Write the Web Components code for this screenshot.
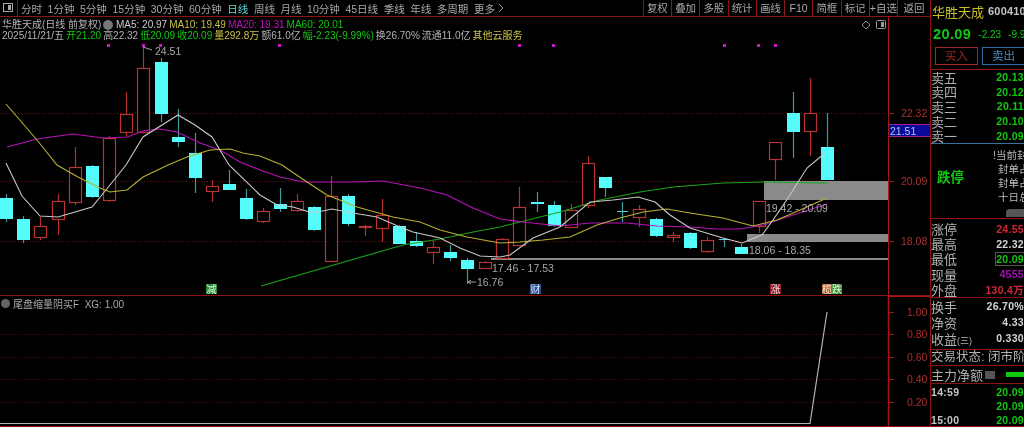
<!DOCTYPE html>
<html>
<head>
<meta charset="utf-8">
<style>
  html, body { margin: 0; padding: 0; background: #000; overflow: hidden; }
  body { font: 10px "Liberation Sans", "Noto Sans CJK SC", sans-serif; color: #b8b8b8; }
</style>
</head>
<body>
<stock-terminal>
  <kline-toolbar slot="toolbar"></kline-toolbar>
  <price-chart slot="main"></price-chart>
  <indicator-chart slot="main"></indicator-chart>
  <quote-panel slot="side"></quote-panel>
</stock-terminal>

<script>
const FONT = '"Liberation Sans", "Noto Sans CJK SC", sans-serif';
const RED_LINE = "#8e1414";

const toPoints = list => list.map(p => p.join(",")).join(" ");

class StockTerminal extends HTMLElement {
  constructor() {
    super();
    const shadowRoot = this.attachShadow({ mode: "open" });
    shadowRoot.innerHTML = `
    <style>
    :host { display: flex; width: 1024px; height: 427px; background: #000; overflow: hidden; filter: blur(.3px); }
    .left { width: 930px; display: flex; flex-direction: column; }
    .side { width: 94px; }
    </style>
    <div class="left">
      <slot name="toolbar"></slot>
      <slot name="main"></slot>
    </div>
    <div class="side"><slot name="side"></slot></div>`;
  }
}

class KlineToolbar extends HTMLElement {
  constructor() {
    super();
    const shadowRoot = this.attachShadow({ mode: "open" });
    this.periods = ["分时", "1分钟", "5分钟", "15分钟", "30分钟", "60分钟", "日线", "周线", "月线", "10分钟", "45日线", "季线", "年线", "多周期", "更多"];
    this.tools = ["复权", "叠加", "多股", "统计", "画线", "F10", "简框", "标记", "+自选", "返回"];
    shadowRoot.innerHTML = this._render();
  }

  _render() {
    const periods = this.periods.map(p => `<span class="${p === "日线" ? "on" : ""}">${p}</span>`).join("");
    const tools = this.tools.map(t => `<b>${t}</b>`).join("");
    return `
    <style>
    :host { display: flex; align-items: center; height: 16px; border-bottom: 1px solid ${RED_LINE}; font: 10.5px ${FONT}; color: #a8a8a8; white-space: nowrap; }
    svg { display: block; }
    .icon { width: 18px; height: 16px; box-sizing: border-box; padding: 3px 0 0 3px; border-right: 1px solid ${RED_LINE}; flex: none; }
    .periods { display: flex; gap: 5.6px; padding-left: 3px; flex: 1; align-items: center; }
    .on { color: #5fd8d8; }
    .tools { display: flex; height: 16px; }
    b { font-weight: normal; width: 28.25px; box-sizing: border-box; border-left: 1px solid ${RED_LINE}; text-align: center; line-height: 16px; }
    b:last-child { width: 33px; }
    .chev { margin-left: -3px; }
    </style>
    <div class="icon"><svg width="11" height="10"><rect x=".5" y=".5" width="9" height="8" fill="none" stroke="#aaa"/><rect x="5" y="2" width="3" height="5" fill="#aaa"/></svg></div>
    <div class="periods">${periods}<svg class="chev" width="6" height="10"><path d="M1 1l4 4-4 4" fill="none" stroke="#999"/></svg></div>
    <div class="tools">${tools}</div>`;
  }
}

class PriceChart extends HTMLElement {
  constructor() {
    super();
    const shadowRoot = this.attachShadow({ mode: "open" });
    // x, wick top, wick bottom, body top, body bottom, up
    this.candles = [
      [6, 194, 222, 198, 219, 0], [23, 216, 243, 219, 240, 0], [40, 217, 240, 226, 237, 1], [58, 194, 235, 201, 219, 1],
      [75, 147, 205, 167, 202, 1], [92, 165, 198, 166, 197, 0], [109, 136, 202, 138, 200, 1], [126, 92, 136, 114, 132, 1],
      [143, 45, 132, 68, 132, 1], [161, 58, 122, 62, 114, 0], [178, 109, 147, 137, 142, 0], [195, 133, 193, 153, 178, 0],
      [212, 180, 202, 186, 191, 1], [229, 170, 190, 184, 190, 0], [246, 189, 220, 198, 219, 0], [263, 208, 223, 211, 221, 1],
      [280, 188, 212, 204, 209, 0], [297, 194, 212, 201, 210, 1], [314, 206, 231, 207, 230, 0], [331, 176, 261, 196, 261, 1],
      [348, 194, 226, 196, 224, 0], [365, 225, 236, 226, 226, 1], [382, 199, 242, 215, 228, 1], [399, 225, 244, 226, 244, 0],
      [416, 232, 247, 241, 246, 0], [433, 241, 264, 247, 252, 1], [450, 245, 261, 252, 258, 0], [467, 258, 284, 260, 269, 0],
      [485, 261, 269, 262, 268, 1], [502, 238, 259, 239, 258, 1], [519, 187, 246, 207, 245, 1], [537, 192, 212, 202, 204, 0],
      [554, 201, 227, 205, 226, 0], [571, 204, 228, 210, 227, 1], [588, 156, 208, 163, 205, 1], [605, 177, 197, 177, 188, 0],
      [622, 202, 222, 211, 211, 0], [639, 205, 227, 209, 217, 1], [656, 218, 237, 219, 236, 0], [673, 232, 242, 235, 237, 1],
      [690, 232, 249, 233, 248, 0], [707, 237, 253, 240, 251, 1], [724, 238, 247, 239, 239, 0], [741, 244, 254, 247, 254, 0],
      [759, 201, 233, 201, 226, 1], [775, 142, 180, 142, 159, 1], [793, 92, 158, 113, 132, 0], [810, 78, 156, 113, 131, 1],
      [827, 113, 180, 147, 180, 0]
    ];
    this.ma5 = [[6, 163], [22, 196], [40, 216], [58, 217], [92, 207], [110, 185], [126, 165], [143, 137], [178, 115], [195, 125], [212, 137], [229, 165], [260, 195], [277, 205], [293, 207], [313, 213], [332, 209], [353, 213], [377, 217], [400, 227], [413, 232], [440, 238], [460, 248], [480, 256], [500, 257], [510, 255], [533, 238], [560, 227], [590, 202], [613, 200], [638, 197], [655, 202], [670, 215], [690, 228], [723, 238], [742, 243], [762, 235], [773, 220], [788, 198], [807, 168], [825, 153]];
    this.ma10 = [[6, 104], [37, 140], [57, 165], [78, 177], [100, 188], [110, 192], [127, 190], [143, 177], [168, 165], [187, 157], [210, 150], [230, 149], [243, 153], [260, 156], [282, 165], [307, 182], [327, 195], [357, 207], [393, 217], [420, 222], [440, 230], [467, 237], [500, 243], [520, 242], [543, 240], [570, 237], [597, 225], [620, 218], [643, 212], [667, 209], [690, 213], [723, 218], [753, 226], [777, 220], [800, 210], [827, 198]];
    this.ma20 = [[7, 147], [37, 139], [73, 134], [103, 138], [127, 137], [143, 131], [160, 129], [177, 132], [200, 143], [220, 150], [240, 162], [260, 170], [280, 177], [303, 182], [353, 182], [383, 181], [420, 188], [447, 195], [473, 208], [500, 219], [523, 222], [560, 226], [590, 223], [627, 223], [657, 226], [690, 227], [717, 229], [740, 229], [763, 225], [787, 217], [827, 204]];
    this.ma60 = [[261, 286], [403, 245], [440, 239], [473, 232], [500, 227], [560, 212], [600, 200], [640, 192], [673, 187], [723, 183], [763, 182], [827, 183]];
    this.dots = [108, 143, 160, 279, 519, 553, 724, 758, 775];
    shadowRoot.innerHTML = this._render();
  }

  renderCandles() {
    let items = "";
    this.candles.forEach(([x, hi, lo, top, bottom, up]) => {
      const wick = up ? "#b03030" : "#3e9aa0";
      items += `<line x1="${x + .5}" x2="${x + .5}" y1="${hi}" y2="${lo}" stroke="${wick}" stroke-width="1.2"/>`;
      if (up) {
        items += `<rect x="${x - 5.5}" y="${top + .5}" width="12" height="${Math.max(bottom - top, 1)}" fill="#000" stroke="#b83232" stroke-width="1.2"/>`;
      } else if (bottom - top < 1) {
        items += `<line x1="${x - 5}" x2="${x + 6}" y1="${top + .5}" y2="${top + .5}" stroke="#4fd8dc"/>`;
      } else {
        items += `<rect x="${x - 6}" y="${top}" width="13" height="${bottom - top}" fill="#54fcfc"/>`;
      }
    });
    return items;
  }

  renderMarks() {
    const marks = [[206, 11, "减", "#2e8b3a", "#d8f8d8"], [530, 11, "财", "#2a4f8c", "#cfe0ff"], [770, 11, "涨", "#8c1a2a", "#ffd8d8"], [822, 10, "榄", "#a86030", "#ffe8d0"], [832, 10, "跌", "#3f8f3a", "#dcf8d8"]];
    return marks.map(([x, w, t, bg, fg]) => `
      <rect x="${x}" y="284" width="${w}" height="10" fill="${bg}"/>
      <text x="${x + w / 2}" y="293" fill="${fg}" text-anchor="middle" font-size="10">${t}</text>`).join("");
  }

  _render() {
    const hLines = [113, 181, 241].map(y => `
      <line x1="0" x2="888" y1="${y + .5}" y2="${y + .5}" stroke="#701010" stroke-dasharray="1 2"/>
      <line x1="888" x2="894" y1="${y + .5}" y2="${y + .5}" stroke="#a01818"/>`).join("");
    const labels = [[113, "22.32"], [181, "20.09"], [241, "18.08"]].map(([y, t]) => `<text x="901" y="${y + 4}" fill="#a83030" font-size="10.5">${t}</text>`).join("");
    const notes = [[155, 55, "24.51"], [492, 272, "17.46 - 17.53"], [477, 286, "16.76"], [766, 212, "19.42 - 20.09"], [749, 254, "18.06 - 18.35"]].map(([x, y, t]) => `<text x="${x}" y="${y}" fill="#a8a8a8" font-size="10.5">${t}</text>`).join("");
    const line = (pts, c) => `<polyline points="${toPoints(pts)}" fill="none" stroke="${c}" stroke-width="1.1"/>`;
    return `
    <style>
    :host { display: grid; height: 278px; border-bottom: 1px solid ${RED_LINE}; overflow: hidden; }
    :host > * { grid-area: 1 / 1; }
    svg { display: block; font-family: ${FONT}; }
    .legend { padding: 2px 0 0 2px; line-height: 11px; font-size: 10px; color: #b4b4b4; white-space: nowrap; }
    .row { display: flex; gap: 2px; align-items: center; height: 11px; }
    .row.top span:first-child { width: 90px; }
    .coin { width: 10px; height: 10px; border-radius: 50%; background: #777; margin: 0 1px 0 9px; flex: none; }
    .g { color: #10c810; } .y { color: #c8c048; } .m { color: #c010c0; } .w { color: #c8c8c8; }
    </style>
    <svg width="930" height="278" viewBox="0 17 930 278">
      ${hLines}
      <rect x="764" y="181" width="124" height="19" fill="#8a8a8a"/>
      <rect x="747" y="234" width="141" height="8" fill="#8a8a8a"/>
      <rect x="491" y="258" width="397" height="2" fill="#8a8a8a"/>
      ${this.renderCandles()}
      ${line(this.ma60, "#1aa41a")}
      ${line(this.ma20, "#b812b8")}
      ${line(this.ma10, "#b8b030")}
      ${line(this.ma5, "#c8c8c8")}
      ${this.dots.map(x => `<rect x="${x - 1}" y="44" width="3" height="3" fill="#d014d0"/>`).join("")}
      <path d="M143 47l9 3M468 282h8M468 282l3-2M468 282l3 2" stroke="#a0a0a0" fill="none"/>
      ${notes}
      ${this.renderMarks()}
      <path d="M866 21l4 4-4 4-4-4z" fill="none" stroke="#888"/>
      <rect x="876.5" y="20.5" width="9" height="8" rx="1" fill="none" stroke="#999"/><rect x="881" y="22" width="3" height="5" fill="#999"/>
      <line x1="888.5" x2="888.5" y1="17" y2="295" stroke="#a01818"/>
      <rect x="889" y="124" width="41" height="13" fill="#0a0a98"/>
      <path d="M889 124.5h41M889 136.5h41" stroke="#a02090"/>
      <text x="890" y="134.500" fill="#a8c8f0" font-size="10.5">21.51</text>
      ${labels}
    </svg>
    <div class="legend">
      <div class="row top"><span>华胜天成(日线 前复权)</span><i class="coin"></i><span class="w">MA5: 20.97</span><span class="y">MA10: 19.49</span><span class="m">MA20: 19.31</span><span class="g">MA60: 20.01</span></div>
      <div class="row"><span>2025/11/21/五</span><span><span class="g">开21.20</span></span><span>高22.32</span><span class="g"><span>低20.09</span></span><span class="g">收20.09</span><span class="y">量292.8万</span><span>额61.0亿</span><span class="g">幅-2.23(-9.99%)</span><span>换26.70%</span><span>流通11.0亿</span><span class="y">其他云服务</span></div>
    </div>`;
  }
}

class IndicatorChart extends HTMLElement {
  constructor() {
    super();
    const shadowRoot = this.attachShadow({ mode: "open" });
    this.levels = [[312, "1.00", 0], [334, "0.80", 1], [357, "0.60", 1], [379, "0.40", 1], [402, "0.20", 1]];
    shadowRoot.innerHTML = this._render();
  }

  renderLevels() {
    let items = "";
    this.levels.forEach(([y, label, dashed]) => {
      if (dashed) {
        items += `<line x1="0" x2="888" y1="${y + .5}" y2="${y + .5}" stroke="#5c0e0e" stroke-dasharray="1 2"/>`;
      }
      items += `<line x1="888" x2="894" y1="${y + .5}" y2="${y + .5}" stroke="#a01818"/>`;
      items += `<text x="907" y="${y + 4}" fill="#a83030" font-size="10.5">${label}</text>`;
    });
    return items;
  }

  _render() {
    return `
    <style>
    :host { display: grid; height: 131px; overflow: hidden; }
    :host > * { grid-area: 1 / 1; }
    svg { display: block; font-family: ${FONT}; }
    .legend { display: flex; align-items: center; gap: 3px; height: 12px; padding: 1px 0 0 1px; font-size: 10px; color: #a8a8a8; white-space: nowrap; align-self: start; }
    i { width: 9px; height: 9px; border-radius: 50%; background: #666; flex: none; }
    </style>
    <svg width="930" height="131" viewBox="0 296 930 131">
      ${this.renderLevels()}
      <polyline points="0,423.500 810,423.500 827,312" fill="none" stroke="#b4b4b4" stroke-width="1.2"/>
      <line x1="0" x2="930" y1="426.500" y2="426.500" stroke="#8a1010"/>
      <line x1="888" x2="930" y1="296.500" y2="296.500" stroke="#b01010"/>
      <line x1="888.500" x2="888.500" y1="296" y2="427" stroke="#b01010" stroke-width="1.5"/>
    </svg>
    <div class="legend"><i></i><span>尾盘缩量阴买F&nbsp; XG: 1.00</span></div>`;
  }
}

class QuotePanel extends HTMLElement {
  constructor() {
    super();
    const shadowRoot = this.attachShadow({ mode: "open" });
    shadowRoot.innerHTML = this._render();
  }

  rows(data) {
    return data.map(([k, v, cls]) => `<div class="r"><span>${k}</span><em class="${cls}">${v}</em></div>`).join("");
  }

  _render() {
    return `
    <style>
    :host { display: block; width: 94px; height: 427px; box-sizing: border-box; border-left: 1px solid ${RED_LINE}; overflow: hidden; font: 13px ${FONT}; color: #b0b0b0; white-space: nowrap; }
    section { border-bottom: 1px solid ${RED_LINE}; box-sizing: border-box; overflow: hidden; }
    .title { height: 22px; display: flex; align-items: center; gap: 4px; padding-left: 1px; font-size: 13px; color: #c8c020; }
    .title small { font: bold 11px ${FONT}; color: #c4c4c4; letter-spacing: .2px; }
    .last { height: 24px; display: flex; align-items: center; gap: 7px; padding-left: 2px; color: #10c810; font: 10px ${FONT}; }
    .last strong { font-size: 14.500px; letter-spacing: .4px; }
    .btns { height: 24px; box-sizing: border-box; display: flex; gap: 4px; padding: 1px 0 0 4px; border-bottom: 1px solid ${RED_LINE}; }
    .btns span { flex: none; width: 43px; height: 18px; box-sizing: border-box; border: 1px solid #a02828; color: #a02828; font-size: 11.500px; line-height: 16px; text-align: center; }
    .btns span + span { border-color: #2c6ca8; color: #4c88b8; }
    .r { display: flex; justify-content: space-between; align-items: center; height: 14.600px; }
    em { font: bold 10.500px ${FONT}; letter-spacing: .3px; }
    .g { color: #10c810; } .re { color: #d02838; } .w { color: #d4d4d4; } .m { color: #a010b0; }
    .box { outline: 1px solid #555; outline-offset: 0; }
    .asks { height: 74px; border-bottom-color: #3c6ea0; }
    .limit { height: 75px; display: flex; }
    .limit strong { color: #10c810; font-size: 13.500px; padding: 22px 0 0 6px; width: 52px; flex: none; }
    .limit div { font-size: 10.500px; color: #b8b8b8; line-height: 14px; padding-top: 4px; margin-left: 9px; }
    .limit div span { display: block; }
    .limit div span:first-child { margin-left: -5px; }
    .limit div .chip { width: 22px; height: 8px; background: #555; border-radius: 4px 0 0 0; margin: 5px 0 0 8px; }
    .stats { height: 79px; padding-top: 2px; }
    .stats .r { height: 15.200px; }
    .ratios { height: 52px; }
    .ratios .r { height: 16px; }
    .ratios .paren { font-size: 9px; }
    .trade { height: 16px; font-size: 12.500px; line-height: 15px; }
    .net { height: 18px; display: flex; align-items: center; font-size: 13px; gap: 2px; }
    .net i { width: 10px; height: 8px; background: #555; flex: none; }
    .net b { width: 20px; height: 5px; background: #10c810; margin-left: 9px; flex: none; }
    .ticks { height: 43px; padding-top: 1px; }
    .ticks .r { height: 14px; }
    .ticks .r span { font: bold 10.500px ${FONT}; color: #c4c4c4; letter-spacing: .3px; }
    </style>
    <section style="border:0"><div class="title">华胜天成<small>600410</small></div></section>
    <section style="border:0"><div class="last"><strong>20.09</strong><span>-2.23</span><span>-9.99%</span></div></section>
    <div class="btns"><span>买入</span><span>卖出</span></div>
    <section class="asks">${this.rows([["卖五", "20.13", "g"], ["卖四", "20.12", "g"], ["卖三", "20.11", "g"], ["卖二", "20.10", "g"], ["卖一", "20.09", "g"]])}</section>
    <section class="limit"><strong>跌停</strong><div><span>!当前封</span><span>封单占</span><span>封单占</span><span>十日总</span><span class="chip"></span></div></section>
    <section class="stats">${this.rows([["涨停", "24.55", "re"], ["最高", "22.32", "w"], ["最低", "<span class='box'>20.09</span>", "g"], ["现量", "4555", "m"], ["外盘", "130.4万", "re"]])}</section>
    <section class="ratios">${this.rows([["换手", "26.70%", "w"], ["净资", "4.33", "w"], ["收益<span class='paren'>(三)</span>", "0.330", "w"]])}</section>
    <section class="trade">交易状态: 闭市阶段</section>
    <section class="net">主力净额<i></i><b></b></section>
    <section class="ticks">${this.rows([["14:59", "20.09", "g"], ["", "20.09", "g"], ["15:00", "20.09", "g"]])}</section>`;
  }
}

customElements.define("stock-terminal", StockTerminal);
customElements.define("kline-toolbar", KlineToolbar);
customElements.define("price-chart", PriceChart);
customElements.define("indicator-chart", IndicatorChart);
customElements.define("quote-panel", QuotePanel);
</script>
</body>
</html>
